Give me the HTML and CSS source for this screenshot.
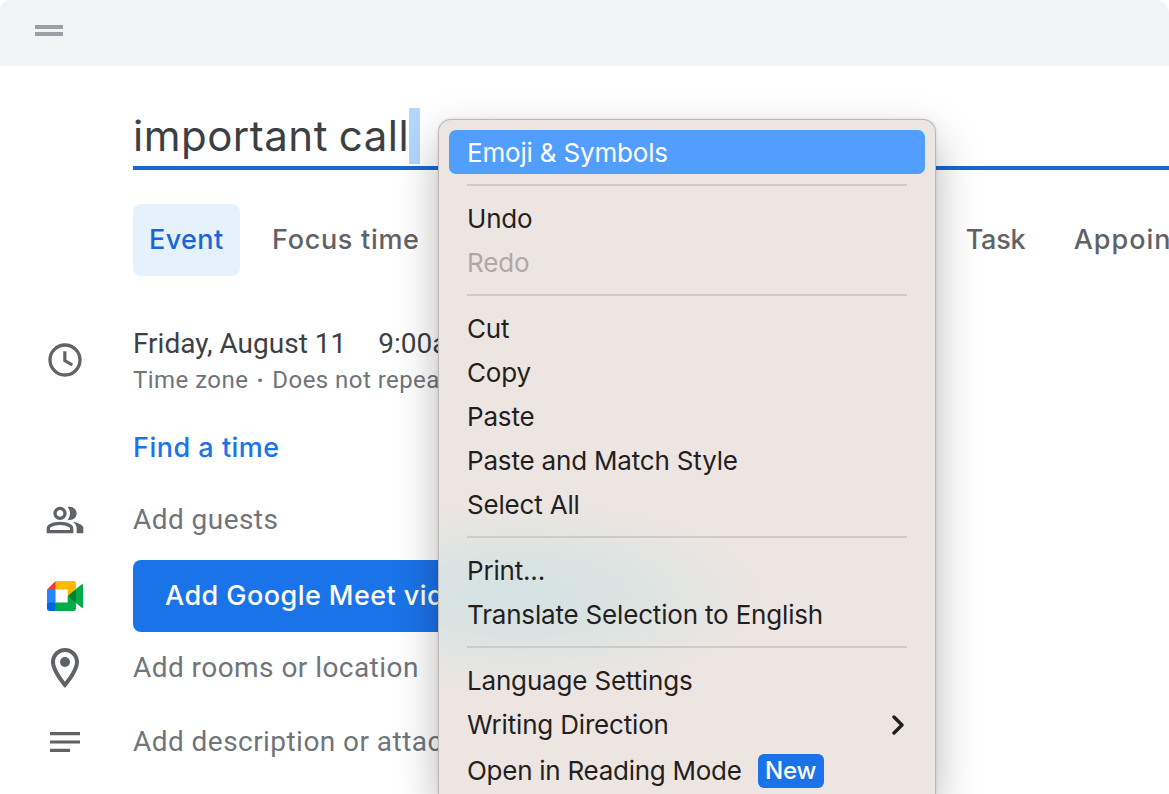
FILE: index.html
```
<!DOCTYPE html>
<html lang="en">
<head>
    <meta charset="UTF-8">
    <title>New event</title>
    <link rel="stylesheet" href="styles.css">
</head>
<body>
<div class="dialog">
    <div class="drag-bar">
        <div class="handle"></div>
    </div>

    <div class="title">important call<span class="selection"></span></div>

    <div class="tabs">
        <div class="tab selected">Event</div>
        <div class="tab">Focus time</div>
        <div class="tab task">Task</div>
        <div class="tab">Appointment</div>
    </div>

    <div class="row when">
        <div class="icon">
            <svg width="40" height="40" viewBox="0 0 24 24">
                <circle cx="12" cy="12" r="9" fill="none" stroke="#5f6368" stroke-width="2"/>
                <path d="M11.9 6.8v5.5l4.5 2.7" fill="none" stroke="#5f6368" stroke-width="1.9"/>
            </svg>
        </div>
        <div class="field">
            <div class="date"><span>Friday, August 11</span><span>9:00am</span></div>
            <div class="sub">Time zone<span class="dot">·</span>Does not repeat</div>
        </div>
    </div>

    <div class="row find">
        <div class="icon"></div>
        <a class="link">Find a time</a>
    </div>

    <div class="row guests">
        <div class="icon">
            <svg width="40" height="40" viewBox="0 0 24 24">
                <path fill="#5f6368" fill-rule="evenodd" d="M1 20v-2.8q0-.85.438-1.562.437-.713 1.162-1.088 1.55-.775 3.15-1.163Q7.35 13 9 13t3.25.387q1.6.388 3.15 1.163.725.375 1.162 1.088Q17 16.35 17 17.2V20zm18 0v-3q0-1.1-.612-2.113-.613-1.012-1.738-1.737 1.275.15 2.4.512 1.125.363 2.1.888.9.5 1.375 1.112Q23 16.275 23 17v3zM9 12q-1.65 0-2.825-1.175Q5 9.65 5 8q0-1.65 1.175-2.825Q7.35 4 9 4q1.65 0 2.825 1.175Q13 6.35 13 8q0 1.65-1.175 2.825Q10.65 12 9 12zm10-4q0 1.65-1.175 2.825Q16.65 12 15 12q-.275 0-.7-.062-.425-.063-.7-.138.675-.8 1.037-1.775Q15 9.05 15 8q0-1.05-.363-2.025Q14.275 5 13.6 4.2q.35-.125.7-.163Q14.65 4 15 4q1.65 0 2.825 1.175Q19 6.35 19 8zM3 18h12v-.8q0-.275-.137-.5-.138-.225-.363-.35-1.35-.675-2.725-1.013Q10.4 15 9 15t-2.775.337Q4.85 15.675 3.5 16.35q-.225.125-.362.35-.138.225-.138.5zm6-8q.825 0 1.413-.588Q11 8.825 11 8t-.587-1.412Q9.825 6 9 6q-.825 0-1.412.588Q7 7.175 7 8t.588 1.412Q8.175 10 9 10z"/>
            </svg>
        </div>
        <div class="field">Add guests</div>
    </div>

    <div class="row meet">
        <div class="icon">
            <svg width="36.5" height="30" viewBox="0 0 87.5 72">
                <path fill="#00832d" d="M49.5 36l8.53 9.75 11.47 7.33 2-17.02-2-16.64-11.69 6.44z"/>
                <path fill="#0066da" d="M0 51.5V66c0 3.315 2.685 6 6 6h14.5l3-10.96-3-9.54-9.95-3z"/>
                <path fill="#e94235" d="M20.5 0L0 20.5l10.55 3 9.95-3 2.95-9.41z"/>
                <path fill="#2684fc" d="M20.5 20.5H0v31h20.5z"/>
                <path fill="#00ac47" d="M82.6 8.68L69.5 19.42v33.66l13.16 10.79c1.97 1.54 4.85.135 4.85-2.37V11c0-2.535-2.945-3.925-4.91-2.32zM49.5 36v15.5h-29V72h43c3.315 0 6-2.685 6-6V53.08z"/>
                <path fill="#ffba00" d="M63.5 0h-43v20.5h29V36l20-16.57V6c0-3.315-2.685-6-6-6z"/>
            </svg>
        </div>
        <div class="button">Add Google Meet video</div>
    </div>

    <div class="row">
        <div class="icon">
            <svg width="48" height="48" viewBox="0 0 24 24">
                <path fill="#5f6368" fill-rule="evenodd" d="M12 2C8.13 2 5 5.13 5 9c0 5.25 7 13 7 13s7-7.75 7-13c0-3.87-3.13-7-7-7zM7 9c0-2.76 2.24-5 5-5s5 2.24 5 5c0 2.88-2.88 7.19-5 9.88C9.92 16.21 7 11.85 7 9z"/>
                <circle cx="12" cy="9" r="2.5" fill="#5f6368"/>
            </svg>
        </div>
        <div class="field">Add rooms or location</div>
    </div>

    <div class="row description">
        <div class="icon">
            <svg width="30" height="20" viewBox="0 0 30 20">
                <path fill="#5f6368" d="M0 0h30v3.2H0zM0 8.4h30v3.2H0zM0 16.8h20V20H0z"/>
            </svg>
        </div>
        <div class="field">Add description or attachment</div>
    </div>
</div>

<div class="menu">
    <div class="item active">Emoji &amp; Symbols</div>
    <div class="separator"></div>
    <div class="item">Undo</div>
    <div class="item disabled">Redo</div>
    <div class="separator"></div>
    <div class="item">Cut</div>
    <div class="item">Copy</div>
    <div class="item">Paste</div>
    <div class="item">Paste and Match Style</div>
    <div class="item">Select All</div>
    <div class="separator"></div>
    <div class="item">Print...</div>
    <div class="item">Translate Selection to English</div>
    <div class="separator"></div>
    <div class="item">Language Settings</div>
    <div class="item">Writing Direction
        <svg class="chevron" width="12" height="20" viewBox="0 0 12 20">
            <path d="M2 2l8 8-8 8" fill="none" stroke="#231f1e" stroke-width="3.4" stroke-linecap="round" stroke-linejoin="round"/>
        </svg>
    </div>
    <div class="item reading">Open in Reading Mode <span class="badge">New</span></div>
</div>
</body>
</html>
```
FILE: styles.css
```
* {
    box-sizing: border-box;
}

body {
    background: #fff;
    height: 794px;
    margin: 0;
    overflow: hidden;
    position: relative;
    width: 1169px;
}

.dialog {
    color: #70757a;
    font: 28px/36px Roboto, sans-serif;
    height: 794px;
    letter-spacing: 0.45px;
    overflow: hidden;
    white-space: nowrap;
}

.drag-bar {
    background: #f1f3f4;
    border-radius: 10px 14px 0 0;
    height: 66px;
    padding: 25px 0 0 35px;
}

.handle {
    border: solid #9aa0a6;
    border-width: 4px 0;
    height: 11px;
    width: 28px;
}

.title {
    border-bottom: 4px solid #1967d2;
    color: #3c4043;
    display: flex;
    font: 42px/56px Inter, sans-serif;
    height: 62px;
    letter-spacing: 0.5px;
    margin: 42px 0 0 133px;
    word-spacing: -1.4px;
}

.selection {
    background: #b3d7ff;
    height: 56px;
    width: 11px;
}

.tabs {
    color: #5f6368;
    display: flex;
    font: 500 27px/72px Inter, sans-serif;
    gap: 16px;
    letter-spacing: 0.7px;
    margin: 34px 0 0 133px;
}

.tab {
    border-radius: 8px;
    flex: none;
    padding: 0 16px;
}

.tab.selected {
    background: #e6f1fe;
    color: #1967d2;
    letter-spacing: 0.4px;
    width: 107px;
}

.tab.task {
    letter-spacing: -0.2px;
    margin-left: 498px;
    width: 92px;
}

.tab.task + .tab {
    letter-spacing: 1px;
}

.row {
    align-items: center;
    display: flex;
    height: 72px;
}

.icon {
    display: flex;
    flex: none;
    justify-content: center;
    margin-right: 3px;
    width: 130px;
}

.when {
    height: 72px;
    margin-top: 48px;
}

.when .field {
    padding-top: 2px;
}

.date {
    color: #3c4043;
    display: flex;
    gap: 32px;
    letter-spacing: 0;
    line-height: 38px;
}

.sub {
    font-size: 24px;
    letter-spacing: 0.45px;
    line-height: 35px;
}

.dot {
    display: inline-block;
    font-weight: 700;
    text-align: center;
    width: 24px;
}

.find {
    margin-top: 16px;
}

.link {
    color: #1a73e8;
    font: 500 27px/36px Inter, sans-serif;
    letter-spacing: 0.5px;
}

.meet {
    margin-top: 4px;
}

.button {
    background: #1a73e8;
    border-radius: 8px;
    color: #fff;
    font: 500 27px/72px Inter, sans-serif;
    letter-spacing: 0.45px;
    padding: 0 32px;
}

.description {
    margin-top: 2px;
}

/* context menu */

.menu {
    background: radial-gradient(ellipse 250px 96px at 80px 476px, #d4e2e3 0%, #d9e3e2 35%, #e4e5e2 70%, #ede5e2 100%) #ede5e2;
    background-clip: padding-box;
    border: 1px solid #bdb8b6;
    border-bottom: 0;
    border-radius: 13px 13px 0 0;
    box-shadow: 0 18px 44px rgba(0, 0, 0, 0.28), 0 0 3px rgba(0, 0, 0, 0.12);
    color: #231f1e;
    font: 26px/44px Inter, sans-serif;
    height: 675px;
    left: 438px;
    letter-spacing: -0.18px;
    padding: 10px 10px 0;
    position: absolute;
    top: 119px;
    white-space: nowrap;
    width: 498px;
}

.item {
    align-items: center;
    border-radius: 7px;
    display: flex;
    height: 44px;
    padding: 2px 18px 0;
}

.item.active {
    background: #529eff;
    color: #fff;
}

.item.disabled {
    color: #b0a8a6;
}

.separator {
    border-bottom: 2px solid #d1caca;
    height: 12px;
    margin: 0 18px 10px;
}

.chevron {
    margin-left: auto;
    margin-right: 3px;
}

.item.reading {
    height: 48px;
    letter-spacing: -0.27px;
}

.badge {
    background: #1a73e8;
    border-radius: 6px;
    color: #fff;
    font-size: 24px;
    font-weight: 500;
    line-height: 34px;
    margin-left: 16px;
    text-align: center;
    width: 66px;
}
```
